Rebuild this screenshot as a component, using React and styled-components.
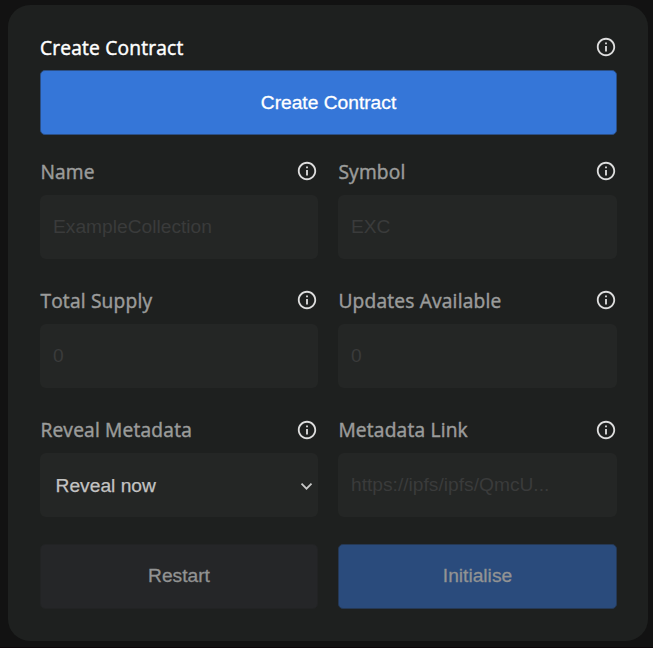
import React from "react";
import styled, { createGlobalStyle } from "styled-components";
import { MdInfoOutline } from "react-icons/md";

const GlobalStyle = createGlobalStyle`
  * { box-sizing: border-box; }
  body {
    margin: 0;
    background: #121212;
    font-family: "Open Sans", sans-serif;
  }
`;

const Page = styled.main`
  height: 648px;
  padding: 5px 5px 0 8px;
  border-bottom: 1px solid #0c0609;
`;

const Card = styled.form`
  height: 635.5px;
  padding: 26px 31px 0 32px;
  border-radius: 22px;
  background: #1e201f;
`;

const Grid = styled.div`
  display: grid;
  grid-template-columns: 278px 279px;
  column-gap: 20px;
  row-gap: 27px;
  margin: 21.5px 0 26.6px;
`;

const Field = styled.div`
  min-width: 0;
`;

const LabelRow = styled.div`
  display: flex;
  justify-content: space-between;
  height: ${(p) => (p.$tall ? "39px" : "38.3px")};
  padding-left: ${(p) => (p.$tall ? "0" : "0.4px")};
`;

const Label = styled.label`
  font-size: 19.2px;
  line-height: ${(p) => (p.$strong ? "33px" : "30px")};
  letter-spacing: 0.18px;
  -webkit-text-stroke: 0.45px currentColor;
  color: ${(p) => (p.$strong ? "#fff" : "#9b9c9b")};
`;

const InfoIcon = styled(MdInfoOutline)`
  width: 22px;
  height: 22px;
  margin: ${(p) => p.$top || "3.7px"} 0.5px 0 0;
  color: #dedede;
`;

const Control = styled.div`
  display: flex;
  align-items: center;
  height: 64px;
  border-radius: 6px;
  background: #242625;
`;

const TextInput = styled(Control).attrs({ as: "input", disabled: true })`
  width: 100%;
  padding: 0 13px;
  border: 0;
  font: 19.2px "Liberation Sans", sans-serif;
  &::placeholder {
    color: #3a3b3b;
    opacity: 1;
  }
`;

const Select = styled(Control)`
  justify-content: space-between;
  padding: 2px 5px 0 15.6px;
  font: 19.2px "Liberation Sans", sans-serif;
  -webkit-text-stroke: 0.25px currentColor;
  color: #c3c3c3;
`;

const Chevron = styled.svg`
  width: 13px;
  height: 9px;
  fill: none;
  stroke: #c8c8c8;
  stroke-width: 1.8;
`;

const Button = styled.button`
  display: block;
  width: 100%;
  height: 65px;
  padding: 0;
  border: 1px solid ${(p) => p.$edge};
  border-radius: 5px;
  background: ${(p) => p.$bg};
  color: ${(p) => p.$fg || "#929393"};
  font: 19.2px "Liberation Sans", sans-serif;
  -webkit-text-stroke: 0.3px currentColor;
`;

const Actions = styled.div`
  display: grid;
  grid-template-columns: 278px 279px;
  column-gap: 20px;
`;

const FIELDS = [
  { label: "Name", placeholder: "ExampleCollection" },
  { label: "Symbol", placeholder: "EXC" },
  { label: "Total Supply", placeholder: "0" },
  { label: "Updates Available", placeholder: "0" },
  { label: "Reveal Metadata", value: "Reveal now" },
  { label: "Metadata Link", placeholder: "https://ipfs/ipfs/QmcU..." },
];

export default function App() {
  return (
    <>
      <GlobalStyle />
      <Page>
        <Card>
          <LabelRow $tall>
            <Label $strong>Create Contract</Label>
            <InfoIcon $top="5px" />
          </LabelRow>
          <Button type="button" $bg="#3576d8" $edge="#2b4f86" $fg="#fff">
            Create Contract
          </Button>
          <Grid>
            {FIELDS.map((f) => (
              <Field key={f.label}>
                <LabelRow>
                  <Label>{f.label}</Label>
                  <InfoIcon />
                </LabelRow>
                {f.value ? (
                  <Select>
                    {f.value}
                    <Chevron viewBox="0 0 13 9">
                      <path d="M1.5 1.7 6.5 6.7l5-5" />
                    </Chevron>
                  </Select>
                ) : (
                  <TextInput placeholder={f.placeholder} />
                )}
              </Field>
            ))}
          </Grid>
          <Actions>
            <Button type="button" $bg="#252628" $edge="#222324">Restart</Button>
            <Button type="button" $bg="#2a4b7c" $edge="#253854">Initialise</Button>
          </Actions>
        </Card>
      </Page>
    </>
  );
}
